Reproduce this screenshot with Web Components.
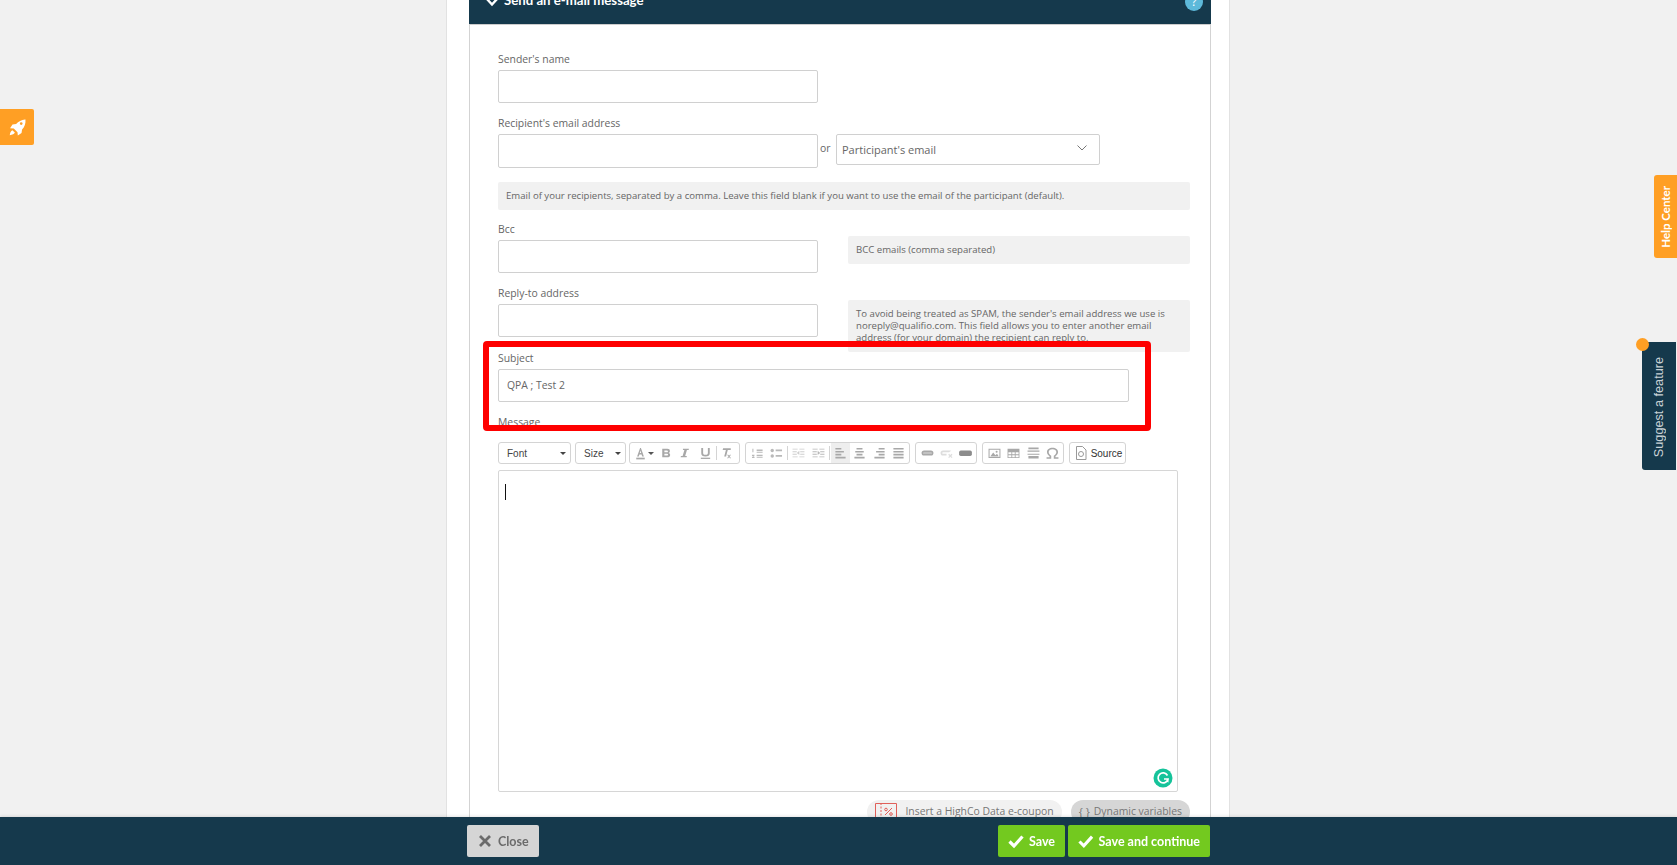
<!DOCTYPE html>
<html>
<head>
<meta charset="utf-8">
<title>Send an e-mail message</title>
<style>
    html, body { margin: 0; height: 100%; overflow: hidden; }
    body { background: #f1f1f1; font-family: "Open Sans", "Noto Sans", sans-serif; color: #666; }
</style>
</head>
<body>
<mail-page>
    <mail-panel heading="Send an e-mail message">
        <form-row>
            <form-field label="Sender's name"></form-field>
        </form-row>
        <form-row tall>
            <form-field label="Recipient's email address" tall></form-field>
            <or-select slot="side">Participant's email</or-select>
        </form-row>
        <hint-box wide>Email of your recipients, separated by a comma. Leave this field blank if you want to use the email of the participant (default).</hint-box>
        <form-row>
            <form-field label="Bcc"></form-field>
            <hint-box slot="side">BCC emails (comma separated)</hint-box>
        </form-row>
        <form-row last>
            <form-field label="Reply-to address"></form-field>
            <hint-box slot="side">To avoid being treated as SPAM, the sender's email address we use is noreply@qualifio.com. This field allows you to enter another email address (for your domain) the recipient can reply to.</hint-box>
        </form-row>
        <form-row full>
            <form-field label="Subject" full>QPA ; Test 2</form-field>
        </form-row>
        <rich-editor label="Message"></rich-editor>
    </mail-panel>
</mail-page>
<red-outline></red-outline>
<rocket-tab></rocket-tab>
<help-tab>Help Center</help-tab>
<suggest-tab>Suggest a feature</suggest-tab>
<bottom-bar></bottom-bar>

<script>
class MailPage extends HTMLElement {
    constructor() {
        super();
        this.attachShadow({ mode: 'open' }).innerHTML = `
            <style>
                :host {
                    display: block;
                    width: 784px;
                    height: 900px;
                    margin: -24px 0 0 446px;
                    background: #fff;
                    border-left: 1px solid #e2e2e2;
                    border-right: 1px solid #e2e2e2;
                    padding-left: 22px;
                    box-sizing: border-box;
                }
            </style>
            <slot></slot>
        `;
    }
}

class MailPanel extends HTMLElement {
    constructor() {
        super();
        const heading = this.getAttribute('heading');
        this.attachShadow({ mode: 'open' }).innerHTML = `
            <style>
                :host { display: block; width: 742px; }
                .head {
                    height: 48px;
                    background: #15394c;
                    color: #fff;
                    display: flex;
                    align-items: center;
                    padding: 0 8px 0 16px;
                    box-sizing: border-box;
                    font: 700 13.200px Lato, sans-serif;
                }
                .head svg { margin: 4px 5px 0 0; }
                .head span { flex: 1; }
                .help {
                    flex: none;
                    width: 18px;
                    height: 18px;
                    border-radius: 50%;
                    background: #5db9da;
                    color: #fff;
                    font: 400 12px/18px "Open Sans", sans-serif;
                    text-align: center;
                    margin-top: 4px;
                }
                .body {
                    border: 1px solid #d3d3d3;
                    border-top-color: #ccc;
                    border-bottom: 0;
                    padding: 24px 20px 0 28px;
                    height: 840px;
                    box-sizing: border-box;
                }
            </style>
            <div class="head">
                <svg width="14" height="10" viewBox="0 0 14 10" fill="none" stroke="#fff" stroke-width="2.400"><path d="M1.500 1.500 7 7.500l5.500-6"/></svg>
                <span>${heading}</span>
                <div class="help">?</div>
            </div>
            <div class="body"><slot></slot></div>
        `;
    }
}

class FormRow extends HTMLElement {
    constructor() {
        super();
        this.attachShadow({ mode: 'open' }).innerHTML = `
            <style>
                :host {
                    display: grid;
                    grid-template-columns: 320px 342px;
                    column-gap: 30px;
                    height: 64px;
                    align-items: start;
                }
                :host([tall]) { height: 69px; grid-template-columns: 320px auto; column-gap: 0; }
                :host([last]) { height: 65px; }
                :host([full]) { display: block; height: 64px; }
            </style>
            <slot></slot>
            <slot name="side"></slot>
        `;
    }
}

class FormField extends HTMLElement {
    constructor() {
        super();
        const label = this.getAttribute('label');
        this.attachShadow({ mode: 'open' }).innerHTML = `
            <style>
                :host { display: block; }
                :host([full]) { width: 631px; }
                label {
                    display: block;
                    font-size: 10.400px;
                    line-height: 20px;
                    margin-bottom: 1px;
                    color: #666;
                }
                .input {
                    height: 33px;
                    box-sizing: border-box;
                    border: 1px solid #d0d0d0;
                    border-radius: 2px;
                    background: #fff;
                    padding: 0 8px;
                    font-size: 10.400px;
                    line-height: 30px;
                    color: #666;
                }
                :host([tall]) .input { height: 34px; }
            </style>
            <label>${label}</label>
            <div class="input"><slot></slot></div>
        `;
    }
}

class OrSelect extends HTMLElement {
    constructor() {
        super();
        this.attachShadow({ mode: 'open' }).innerHTML = `
            <style>
                :host {
                    display: flex;
                    align-items: flex-start;
                    margin-top: 21px;
                    font-size: 10.400px;
                    color: #666;
                }
                .or { width: 18px; padding-left: 2px; box-sizing: border-box; line-height: 29px; }
                .select {
                    width: 264px;
                    height: 31px;
                    box-sizing: border-box;
                    border: 1px solid #d0d0d0;
                    border-radius: 2px;
                    display: flex;
                    align-items: center;
                    justify-content: space-between;
                    padding: 0 12px 0 5px;
                    font-size: 11px;
                }
                svg { margin-top: -3px; }
            </style>
            <span class="or">or</span>
            <div class="select">
                <span><slot></slot></span>
                <svg width="10" height="6" viewBox="0 0 10 6" fill="none" stroke="#777" stroke-width="1"><path d="M.5.5 5 5 9.500.5"/></svg>
            </div>
        `;
    }
}

class HintBox extends HTMLElement {
    constructor() {
        super();
        this.attachShadow({ mode: 'open' }).innerHTML = `
            <style>
                :host {
                    display: block;
                    margin-top: 17px;
                    background: #f1f1f1;
                    border-radius: 2px;
                    padding: 8px 8px;
                    font-size: 9.600px;
                    line-height: 12px;
                    color: #666;
                    box-sizing: border-box;
                }
                :host([wide]) { margin: 0 0 9px; height: 28px; width: 692px; }
            </style>
            <slot></slot>
        `;
    }
}

const ICONS = {
    color: '<path d="M6 12 9.500 2h1L14 12h-2l-.7-2.300H8.700L8 12Zm3.200-4h1.600L10 5Z"/><rect x="5" y="13.500" width="10" height="2"/>',
    bold: '<path d="M5 3h6c2 0 3 1 3 2.800 0 1-.5 1.700-1.300 2.100 1 .4 1.600 1.200 1.600 2.400 0 2-1.300 2.700-3.300 2.700H5Zm2.500 2v2.200h3c.8 0 1.200-.4 1.200-1.100S11.300 5 10.500 5Zm0 4v2h3.200c.8 0 1.200-.4 1.200-1s-.4-1-1.200-1Z"/>',
    italic: '<path d="M7 3h7l-.3 1.500h-2L9.600 11.500h2L11.300 13h-7l.3-1.500h2l2.100-7H7Z"/>',
    underline: '<path d="M5 2h2.200v6c0 1.500.9 2.200 2.800 2.200s2.800-.7 2.800-2.200V2H15v6.200c0 2.600-1.800 3.800-5 3.800s-5-1.200-5-3.800Z"/><rect x="4.500" y="13.500" width="11" height="1.500"/>',
    clear: '<path d="M6 2.500h9V4.500h-3.500L9.500 12H7.300l2-7.500H5.500Z"/><path d="M12 10l1 1.300 1-1.300h1.300l-1.600 2 1.700 2.200H14l-1-1.400-1 1.400h-1.400l1.700-2.200L10.700 10Z"/>',
    numbered: '<path d="M4 3h1.200v4H4Zm-.5 7h3v1L5 12.500h1.500V14h-3v-1L5 11.500H3.500ZM9 4h7v1.600H9Zm0 2.500h7v1.200H9Zm0 3.500h7v1.600H9Zm0 2.500h7v1.200H9Z"/>',
    bulleted: '<circle cx="5" cy="5" r="2"/><circle cx="5" cy="11.500" r="2"/><path d="M9 4h7.500v2H9Zm0 6.500h7.500v2H9Z"/>',
    outdent: '<path d="M3 3h6v1H3Zm8 0h6v1h-6ZM3 12h6v1H3Zm8 0h6v1h-6ZM3 6h5v1H3Zm9 0h5v1h-5ZM3 9h5v1H3Zm9 0h5v1h-5ZM8 8l3-2.500v5Z"/>',
    indent: '<path d="M3 3h6v1H3Zm8 0h6v1h-6ZM3 12h6v1H3Zm8 0h6v1h-6ZM3 6h5v1H3Zm9 0h5v1h-5ZM3 9h5v1H3Zm9 0h5v1h-5ZM12 8 9 5.500v5Z"/>',
    left: '<path d="M4 2h7v2H4Zm0 3.500h10v2H4ZM4 9h7v2H4Zm0 3.500h12v2H4Z"/>',
    center: '<path d="M6.500 2h7v2h-7ZM5 5.500h10v2H5ZM6.500 9h7v2h-7ZM4 12.500h12v2H4Z"/>',
    right: '<path d="M9 2h7v2H9ZM6 5.500h10v2H6ZM9 9h7v2H9ZM4 12.500h12v2H4Z"/>',
    justify: '<path d="M4 2h12v2H4Zm0 3.500h12v2H4ZM4 9h12v2H4Zm0 3.500h12v2H4Z"/>',
    link: '<path d="M6 5h8a3 3 0 0 1 0 6H6a3 3 0 0 1 0-6Zm0 2a1 1 0 0 0 0 2h8a1 1 0 0 0 0-2Z"/><rect x="5" y="7.300" width="10" height="1.400"/>',
    unlink: '<path d="M6 5h8a3 3 0 0 1 1.500.4L13 7H6a1 1 0 0 0 0 2h4v2H6a3 3 0 0 1 0-6Z" opacity=".7"/><path d="m13 9 1.500 1.500L16 9l1 1-1.500 1.500L17 13l-1 1-1.500-1.500L13 14l-1-1 1.500-1.500L12 10Z" opacity=".7"/>',
    anchor: '<rect x="2.500" y="5" width="15" height="6.500" rx="2" fill="#8c8c8c"/>',
    image: '<path d="M3 3h14v11H3Zm1.200 1.200v8.600h11.600V4.200Z"/><path d="M5 12 8.500 7.500l2.500 3 2-1.500 2 3Z"/><circle cx="12.500" cy="6.500" r="1.200"/>',
    table: '<path d="M3 3h14v11H3Zm1 4v2.500h3.500V7Zm4.500 0v2.500h3V7Zm4 0v2.500H16V7ZM4 10.500V13h3.500v-2.500Zm4.500 0V13h3v-2.500Zm4 0V13H16v-2.500Z"/>',
    rule: '<path d="M4 1.500h12v2H4Zm-1 3.500h14v1.500H3Zm0 4h14v1H3Zm1 2.500h12v3H4Z"/>',
    omega: '<path d="M3 13h3.500v-1.300C4.600 10.600 3.500 8.800 3.500 6.800 3.500 3.800 6.200 1.800 10 1.800s6.500 2 6.500 5c0 2-1.100 3.800-3 4.900V13H17v1.700h-5.500v-3.600c1.900-.8 3-2.400 3-4.200 0-2.100-1.800-3.400-4.500-3.400S5.500 4.800 5.500 6.900c0 1.800 1.100 3.400 3 4.200v3.600H3Z"/>'
};

class ToolButton extends HTMLElement {
    constructor() {
        super();
        const icon = this.getAttribute('icon');
        this.attachShadow({ mode: 'open' }).innerHTML = `
            <style>
                :host {
                    display: flex;
                    align-items: center;
                    justify-content: center;
                    width: 19.300px;
                    height: 20px;
                    flex: none;
                }
                :host([on]) { background: #eee; }
                :host([faint]) svg { opacity: .55; }
                :host([soft]) svg { opacity: .8; }
                :host([arrow]) { width: 26px; padding-right: 7px; box-sizing: border-box; position: relative; }
                .arrow {
                    position: absolute;
                    right: 3px;
                    top: 9px;
                    border: 3px solid transparent;
                    border-top-color: #555;
                    border-bottom-width: 0;
                }
                svg { fill: #a8a8a8; display: block; }
            </style>
            <svg width="17" height="14" viewBox="0 0 20 16">${ICONS[icon]}</svg>
            ${this.hasAttribute('arrow') ? '<span class="arrow"></span>' : ''}
        `;
    }
}

class ToolGroup extends HTMLElement {
    constructor() {
        super();
        this.attachShadow({ mode: 'open' }).innerHTML = `
            <style>
                :host {
                    display: flex;
                    align-items: center;
                    flex: none;
                    height: 22px;
                    box-sizing: border-box;
                    border: 1px solid #d4d4d4;
                    border-radius: 3px;
                    padding: 0 1px 0 2px;
                    background: #fff;
                    font: 10px "Liberation Sans", Arial, sans-serif;
                    color: #333;
                }
                :host(.first) { padding: 0 3px 0 1px; }
            </style>
            <slot></slot>
        `;
    }
}

class ToolSep extends HTMLElement {
    constructor() {
        super();
        this.attachShadow({ mode: 'open' }).innerHTML = `
            <style>
                :host { display: block; flex: none; width: 1px; height: 14px; margin: 0 1px; background: #d4d4d4; }
                :host(.tight) { margin: 0 0 0 1px; }
            </style>
        `;
    }
}

class ToolCombo extends HTMLElement {
    constructor() {
        super();
        this.attachShadow({ mode: 'open' }).innerHTML = `
            <style>
                :host {
                    display: flex;
                    align-items: center;
                    justify-content: space-between;
                    flex: none;
                    height: 22px;
                    box-sizing: border-box;
                    border: 1px solid #d4d4d4;
                    border-radius: 3px;
                    padding: 0 4px 0 8px;
                    font: 10px "Liberation Sans", Arial, sans-serif;
                    color: #444;
                }
                i { border: 3px solid transparent; border-top-color: #444; border-bottom-width: 0; margin-top: 1px; }
            </style>
            <span><slot></slot></span><i></i>
        `;
    }
}

class RichEditor extends HTMLElement {
    constructor() {
        super();
        const label = this.getAttribute('label');
        this.attachShadow({ mode: 'open' }).innerHTML = `
            <style>
                :host { display: block; width: 692px; }
                label { display: block; font-size: 10.400px; line-height: 20px; margin-bottom: 10px; color: #666; }
                .toolbar { display: flex; height: 22px; }
                .w72 { width: 72.500px; margin-right: 4.500px; }
                .w50 { width: 50.500px; margin-right: 3.500px; }
                .g { margin-right: 4.500px; }
                .src { width: 57.500px; padding: 0 3px; font-size: 10px; gap: 2px; }
                .src svg { flex: none; }
                .area {
                    position: relative;
                    width: 680px;
                    height: 322px;
                    margin-top: 6px;
                    box-sizing: border-box;
                    border: 1px solid #d6d6d6;
                    border-radius: 2px;
                }
                .caret { position: absolute; left: 6px; top: 13px; width: 1px; height: 16px; background: #111; }
                .grammarly {
                    position: absolute;
                    right: 4px;
                    bottom: 3px;
                }
                .chips { display: flex; justify-content: flex-end; gap: 9px; margin-top: 8px; }
                .chip {
                    display: flex;
                    align-items: center;
                    height: 24px;
                    box-sizing: border-box;
                    border-radius: 12px;
                    background: #f1f1f1;
                    font-size: 10.400px;
                    color: #777;
                    padding: 0 8px 2px;
                    white-space: nowrap;
                }
                .chip.dark { background: #d6d6d6; }
                .chip svg { margin: 2px 8px 0 0; }
                .chip b { font-weight: 400; margin-right: 4px; font-size: 11px; }
            </style>
            <label>${label}</label>
            <div class="toolbar">
                <tool-combo class="w72">Font</tool-combo>
                <tool-combo class="w50">Size</tool-combo>
                <tool-group class="g first">
                    <tool-button icon="color" arrow></tool-button>
                    <tool-button icon="bold"></tool-button>
                    <tool-button icon="italic"></tool-button>
                    <tool-button icon="underline"></tool-button>
                    <tool-sep class="tight"></tool-sep>
                    <tool-button icon="clear"></tool-button>
                </tool-group>
                <tool-group class="g">
                    <tool-button icon="numbered" soft></tool-button>
                    <tool-button icon="bulleted" soft></tool-button>
                    <tool-sep></tool-sep>
                    <tool-button icon="outdent" faint></tool-button>
                    <tool-button icon="indent" soft></tool-button>
                    <tool-sep></tool-sep>
                    <tool-button icon="left" on></tool-button>
                    <tool-button icon="center"></tool-button>
                    <tool-button icon="right"></tool-button>
                    <tool-button icon="justify"></tool-button>
                </tool-group>
                <tool-group class="g">
                    <tool-button icon="link"></tool-button>
                    <tool-button icon="unlink" faint></tool-button>
                    <tool-button icon="anchor"></tool-button>
                </tool-group>
                <tool-group class="g">
                    <tool-button icon="image"></tool-button>
                    <tool-button icon="table"></tool-button>
                    <tool-button icon="rule"></tool-button>
                    <tool-button icon="omega"></tool-button>
                </tool-group>
                <tool-group class="src">
                    <svg width="16" height="16" viewBox="0 0 16 16" fill="none" stroke="#999"><path d="M3.500 1.500h6l3.500 3.500v9.500h-9.500Z"/><circle cx="8" cy="9" r="2.500"/></svg>
                    <span>Source</span>
                </tool-group>
            </div>
            <div class="area">
                <div class="caret"></div>
                <svg class="grammarly" width="20" height="20" viewBox="0 0 20 20"><circle cx="10" cy="10" r="9.500" fill="#15c39a"/><path d="M14.500 7.500A5 5 0 1 0 15 11h-4" fill="none" stroke="#fff" stroke-width="1.700"/><path d="M13.500 13.500 15.500 11v3.500Z" fill="#fff"/></svg>
            </div>
            <div class="chips">
                <div class="chip">
                    <svg width="22" height="20" viewBox="0 0 22 20" fill="none" stroke="#e0605a"><path d="M.5 1.500h21v17H.5Z"/><path d="M6 1v18" stroke-dasharray="2 1.500"/><path d="m10 13 7-7"/><circle cx="11" cy="7.500" r="1.300"/><circle cx="16" cy="12" r="1.300"/></svg>
                    <span>Insert a HighCo Data e-coupon</span>
                </div>
                <div class="chip dark"><b>{ }</b><span>Dynamic variables</span></div>
            </div>
        `;
    }
}

class RedOutline extends HTMLElement {
    constructor() {
        super();
        this.attachShadow({ mode: 'open' }).innerHTML = `
            <style>
                :host {
                    position: fixed;
                    left: 483px;
                    top: 341px;
                    width: 668px;
                    height: 90px;
                    box-sizing: border-box;
                    border: 6px solid #fe0000;
                    border-radius: 4px;
                }
            </style>
        `;
    }
}

class RocketTab extends HTMLElement {
    constructor() {
        super();
        this.attachShadow({ mode: 'open' }).innerHTML = `
            <style>
                :host {
                    position: fixed;
                    left: 0;
                    top: 109px;
                    width: 34px;
                    height: 36px;
                    background: #ff9f24;
                    border-radius: 0 2px 2px 0;
                    display: flex;
                    align-items: center;
                    justify-content: center;
                }
            </style>
            <svg width="17" height="17" viewBox="0 0 16 16" fill="#fff">
                <path fill-rule="evenodd" d="M15.500.500c.3 3.900-.8 7-3.200 9.300l-.5 3.400-3.500 2.300-.3-3-3.500-3.500-3.500-.3 2.300-3.500 3.400-.5C9 2.500 12 .300 15.500.500ZM11.500 3a1.300 1.300 0 1 0 0 2.600 1.300 1.300 0 0 0 0-2.600Z"/>
                <path d="M3.200 10.500c-1.400.6-2.200 2.300-2.500 4.800 2.500-.3 4.200-1.100 4.800-2.500Z"/>
            </svg>
        `;
    }
}

class HelpTab extends HTMLElement {
    constructor() {
        super();
        this.attachShadow({ mode: 'open' }).innerHTML = `
            <style>
                :host {
                    position: fixed;
                    right: 0;
                    top: 175px;
                    width: 23px;
                    height: 83px;
                    background: #ff9f24;
                    border-radius: 3px 0 0 3px;
                    display: flex;
                    align-items: center;
                    justify-content: center;
                    color: #fff;
                    font: 700 11.500px Lato, sans-serif;
                }
                span { writing-mode: vertical-rl; transform: rotate(180deg); white-space: nowrap; }
            </style>
            <span><slot></slot></span>
        `;
    }
}

class SuggestTab extends HTMLElement {
    constructor() {
        super();
        this.attachShadow({ mode: 'open' }).innerHTML = `
            <style>
                :host {
                    position: fixed;
                    right: 1px;
                    top: 342px;
                    width: 34px;
                    height: 128px;
                    background: #15394c;
                    border-radius: 0 0 0 3px;
                    display: flex;
                    align-items: center;
                    justify-content: center;
                    color: #c8d1d6;
                    font: 12.700px "Liberation Sans", Arial, sans-serif;
                }
                span { writing-mode: vertical-rl; transform: rotate(180deg); white-space: nowrap; margin-top: 3px; }
                i {
                    position: absolute;
                    left: -6.500px;
                    top: -4.500px;
                    width: 13px;
                    height: 13px;
                    border-radius: 50%;
                    background: #ff9f24;
                }
            </style>
            <i></i>
            <span><slot></slot></span>
        `;
    }
}

class BarButton extends HTMLElement {
    constructor() {
        super();
        const glyph = this.getAttribute('icon') === 'x'
            ? '<path d="M3 3l10 10M13 3 3 13" stroke-width="2.800"/>'
            : '<path d="M1.500 8.500 6 13l8.500-9.500" stroke-width="3.200"/>';
        this.attachShadow({ mode: 'open' }).innerHTML = `
            <style>
                :host {
                    display: flex;
                    align-items: center;
                    height: 32px;
                    box-sizing: border-box;
                    padding: 0 10px;
                    border-radius: 2px;
                    background: #73c91f;
                    color: #fff;
                    font: 700 12.500px Lato, sans-serif;
                    white-space: nowrap;
                }
                :host([icon="x"]) { background: #d5d5d5; color: #6b6b6b; }
                svg { margin-right: 5px; stroke: currentColor; fill: none; }
            </style>
            <svg width="16" height="16" viewBox="0 0 16 16">${glyph}</svg>
            <span><slot></slot></span>
        `;
    }
}

class BottomBar extends HTMLElement {
    constructor() {
        super();
        this.attachShadow({ mode: 'open' }).innerHTML = `
            <style>
                :host {
                    position: fixed;
                    left: 0;
                    right: 0;
                    bottom: 0;
                    height: 48px;
                    background: #15394c;
                    box-shadow: 0 -1px 3px rgba(0, 0, 0, 0.1);
                    display: flex;
                    align-items: center;
                    padding-left: 467px;
                }
                .saves { display: flex; gap: 3px; margin-left: auto; margin-right: 467px; }
                .close { width: 72px; }
                .save { width: 67px; }
                .cont { width: 142px; }
            </style>
            <bar-button class="close" icon="x">Close</bar-button>
            <div class="saves">
                <bar-button class="save" icon="check">Save</bar-button>
                <bar-button class="cont" icon="check">Save and continue</bar-button>
            </div>
        `;
    }
}

customElements.define('mail-page', MailPage);
customElements.define('mail-panel', MailPanel);
customElements.define('form-row', FormRow);
customElements.define('form-field', FormField);
customElements.define('or-select', OrSelect);
customElements.define('hint-box', HintBox);
customElements.define('tool-button', ToolButton);
customElements.define('tool-group', ToolGroup);
customElements.define('tool-sep', ToolSep);
customElements.define('tool-combo', ToolCombo);
customElements.define('rich-editor', RichEditor);
customElements.define('red-outline', RedOutline);
customElements.define('rocket-tab', RocketTab);
customElements.define('help-tab', HelpTab);
customElements.define('suggest-tab', SuggestTab);
customElements.define('bar-button', BarButton);
customElements.define('bottom-bar', BottomBar);
</script>
</body>
</html>
